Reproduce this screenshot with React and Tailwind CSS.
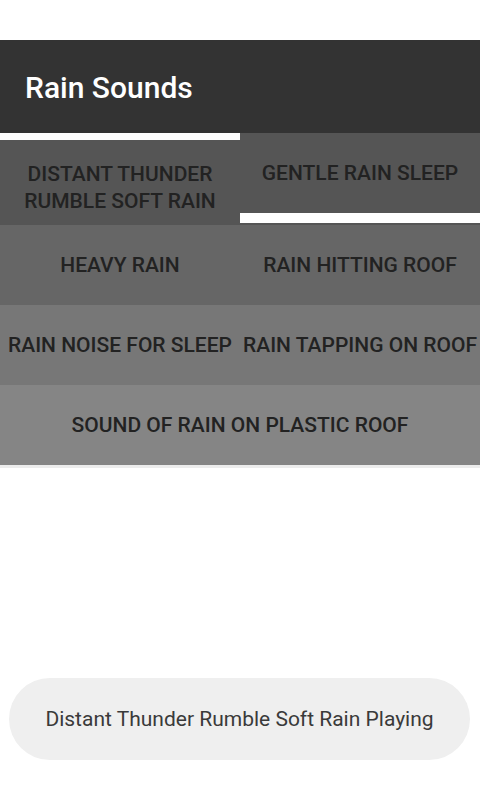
import React from "react";

const font = { fontFamily: "Roboto, 'Noto Sans', sans-serif" };

function Cell({ children, className = "" }) {
  return (
    <div className={`flex items-center justify-center text-center text-[21px] font-medium leading-[27px] text-[#222222] ${className}`}>
      {children}
    </div>
  );
}

export default function App() {
  return (
    <div className="w-[480px] h-[800px] bg-white relative overflow-hidden" style={font}>
      <div className="h-[40px] bg-white" />
      <div className="h-[93px] bg-[#333333] flex items-center px-[25px] pt-[3px]">
        <span className="text-white text-[30px] font-medium leading-none">Rain Sounds</span>
      </div>
      <div className="grid grid-cols-2 h-[92px] bg-[#555555]">
        <div className="flex flex-col">
          <div className="h-[7px] bg-white" />
          <Cell className="flex-1 pt-[10px]">DISTANT THUNDER<br />RUMBLE SOFT RAIN</Cell>
        </div>
        <div className="flex flex-col">
          <Cell className="flex-1">GENTLE RAIN SLEEP</Cell>
          <div className="h-[10px] bg-white" />
          <div className="h-[2px]" />
        </div>
      </div>
      <div className="grid grid-cols-2 h-[80px] bg-[#666666]">
        <Cell>HEAVY RAIN</Cell>
        <Cell>RAIN HITTING ROOF</Cell>
      </div>
      <div className="grid grid-cols-2 h-[80px] bg-[#777777]">
        <Cell className="whitespace-nowrap">RAIN NOISE FOR SLEEP</Cell>
        <Cell className="whitespace-nowrap">RAIN TAPPING ON ROOF</Cell>
      </div>
      <div className="flex h-[80px] bg-[#858585]">
        <Cell className="flex-1">SOUND OF RAIN ON PLASTIC ROOF</Cell>
      </div>
      <div className="h-[3px] bg-[#ececec]" />
      <div className="absolute left-[9px] top-[678px] w-[461px] h-[82px] rounded-full bg-[#efefef] flex items-center justify-center">
        <span className="text-[21px] text-[#3a3a3a] leading-none">Distant Thunder Rumble Soft Rain Playing</span>
      </div>
    </div>
  );
}
